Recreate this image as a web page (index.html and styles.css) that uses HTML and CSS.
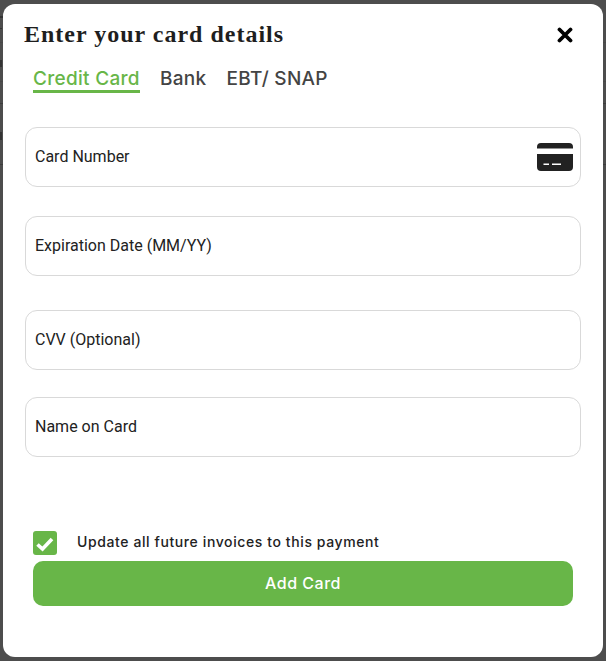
FILE: index.html
```html
<!DOCTYPE html>
<html lang="en">
<head>
    <meta charset="UTF-8">
    <title>Enter your card details</title>
    <link rel="stylesheet" href="styles.css">
</head>
<body>
    <div class="modal">
        <div class="modal_head">
            <h2 class="title">Enter your card details</h2>
            <svg class="close" viewBox="0 0 16 16" width="16" height="16"><path d="M2.5 2.5l11 11M13.5 2.5l-11 11" stroke="#000" stroke-width="3.8" stroke-linecap="round"/></svg>
        </div>
        <div class="tabs">
            <span class="tab active">Credit Card</span>
            <span class="tab">Bank</span>
            <span class="tab">EBT/ SNAP</span>
        </div>
        <div class="field first">
            <span>Card Number</span>
            <svg class="card_icon" viewBox="0 0 36 28" width="36" height="28"><path d="M4 0h28a4 4 0 0 1 4 4v1.500H0V4a4 4 0 0 1 4-4zM0 11h36v13a4 4 0 0 1-4 4H4a4 4 0 0 1-4-4z" fill="#222"/><path d="M6.500 20.500H12V22H6.500zM15 20.500h9V22h-9z" fill="#fff"/></svg>
        </div>
        <div class="field second">Expiration Date (MM/YY)</div>
        <div class="field third">CVV (Optional)</div>
        <div class="field fourth">Name on Card</div>
        <div class="check_row">
            <span class="check">
                <svg viewBox="0 0 24 24" width="24" height="24"><path d="M4.500 13.500l5 4.500 9.500-10" fill="none" stroke="#fff" stroke-width="3.600"/></svg>
            </span>
            <span class="check_text">Update all future invoices to this payment</span>
        </div>
        <button class="add_btn">Add Card</button>
    </div>
</body>
</html>
```

FILE: styles.css
```css
* {
    box-sizing: border-box;
}
body {
    margin: 0;
    height: 661px;
    overflow: hidden;
    background-color: #4d4d4d;
    /* dimmed page showing behind the modal */
    background-image:
        linear-gradient(#474747, #474747),
        linear-gradient(#474747, #474747),
        linear-gradient(#3c3c3c, #3c3c3c),
        linear-gradient(#3c3c3c, #3c3c3c),
        linear-gradient(#333, #333),
        linear-gradient(#333, #333),
        linear-gradient(#333, #333),
        linear-gradient(#333, #333);
    background-size: 100% 1px, 100% 1px, 100% 1px, 100% 1px, 3px 2px, 2px 1px, 2px 7px, 2px 8px;
    background-position: 0 42px, 0 81px, 0 103px, 0 164px, 0 16px, 0 28px, 0 60px, 0 132px;
    background-repeat: no-repeat;
    padding: 4px 3px;
    font-family: "Roboto", sans-serif;
}
.modal {
    width: 600px;
    height: 653px;
    background-color: #fff;
    border-radius: 12px;
    padding: 0 22px;
}
.modal_head {
    display: flex;
    justify-content: space-between;
    align-items: center;
    height: 60px;
    padding-right: 8px;
}
.title {
    margin: 0 0 0 -1px;
    font-family: "Liberation Serif", serif;
    font-size: 24px;
    font-weight: bold;
    color: #1e1e1e;
    letter-spacing: 1px;
}
.close {
    margin-top: 1px;
}
.tabs {
    display: flex;
    gap: 20px;
    padding-left: 8px;
    height: 29px;
}
.tab {
    font-family: "Inter", sans-serif;
    font-size: 19px;
    font-weight: 500;
    color: #444;
    letter-spacing: 0.3px;
    line-height: 29px;
}
.tab.active {
    color: #68b648;
    border-bottom: 3px solid #68b648;
}
.field {
    display: flex;
    justify-content: space-between;
    align-items: center;
    width: 556px;
    height: 60px;
    border: 1px solid #d9d9d9;
    border-radius: 12px;
    padding: 0 7px 2px 9px;
    font-size: 16px;
    color: #222;
}
.card_icon {
    margin-top: 2px;
}
.first {
    margin-top: 34px;
}
.second {
    margin-top: 29px;
}
.third {
    margin-top: 34px;
}
.fourth {
    margin-top: 27px;
}
.check_row {
    display: flex;
    align-items: center;
    margin: 74px 0 0 8px;
    height: 24px;
}
.check {
    display: flex;
    width: 24px;
    height: 24px;
    background-color: #68b648;
    border-radius: 3px;
}
.check_text {
    margin: -4px 0 0 20px;
    font-family: "Inter", sans-serif;
    font-size: 14px;
    font-weight: 500;
    letter-spacing: 0.6px;
    color: #222;
}
.add_btn {
    display: block;
    width: 540px;
    height: 45px;
    margin: 6px 0 0 8px;
    padding: 0 0 2px;
    border: 0;
    border-radius: 10px;
    background-color: #68b648;
    color: #fff;
    font-family: "Inter", sans-serif;
    font-size: 16px;
    font-weight: 500;
    letter-spacing: 0.5px;
}
```
